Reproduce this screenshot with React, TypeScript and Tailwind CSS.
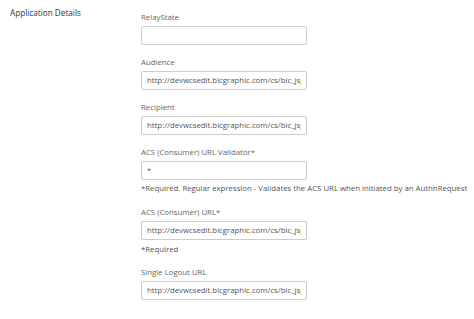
import React from "react";

const URL = "http://devwcsedit.bicgraphic.com/cs/bic_jsg";

function Field({ label, value, mt = "mt-[12px]" }: { label: string; value: string; mt?: string }) {
  return (
    <div className={mt}>
      <div className="h-[11px] leading-[11px] text-[7.8px] text-[#666]">{label}</div>
      <div className="mt-[3px] w-[166px] h-[19px] border border-[#ccc] rounded-[2px] bg-white flex items-center px-[5px]">
        <div className="overflow-hidden whitespace-nowrap text-[7.8px] text-[#555] w-full">{value}</div>
      </div>
    </div>
  );
}

export default function App() {
  return (
    <div className="w-[474px] h-[319px] bg-white overflow-hidden flex" style={{ fontFamily: '"Open Sans", "Liberation Sans", sans-serif' }}>
      <div className="w-[141px] shrink-0 pl-[10px] pt-[7px]">
        <div className="h-[11px] leading-[11px] text-[8.2px] text-[#333]">Application Details</div>
      </div>
      <div className="flex-1">
        <Field label="RelayState" value="" mt="mt-[12px]" />
        <Field label="Audience" value={URL} />
        <Field label="Recipient" value={URL} />
        <Field label="ACS (Consumer) URL Validator*" value="*" />
        <div className="mt-[3px] h-[11px] leading-[11px] text-[7.8px] text-[#555] whitespace-nowrap">
          *Required. Regular expression - Validates the ACS URL when initiated by an AuthnRequest
        </div>
        <Field label="ACS (Consumer) URL*" value={URL} mt="mt-[13px]" />
        <div className="mt-[4px] h-[11px] leading-[11px] text-[7.8px] text-[#555]">*Required</div>
        <Field label="Single Logout URL" value={URL} />
      </div>
    </div>
  );
}
